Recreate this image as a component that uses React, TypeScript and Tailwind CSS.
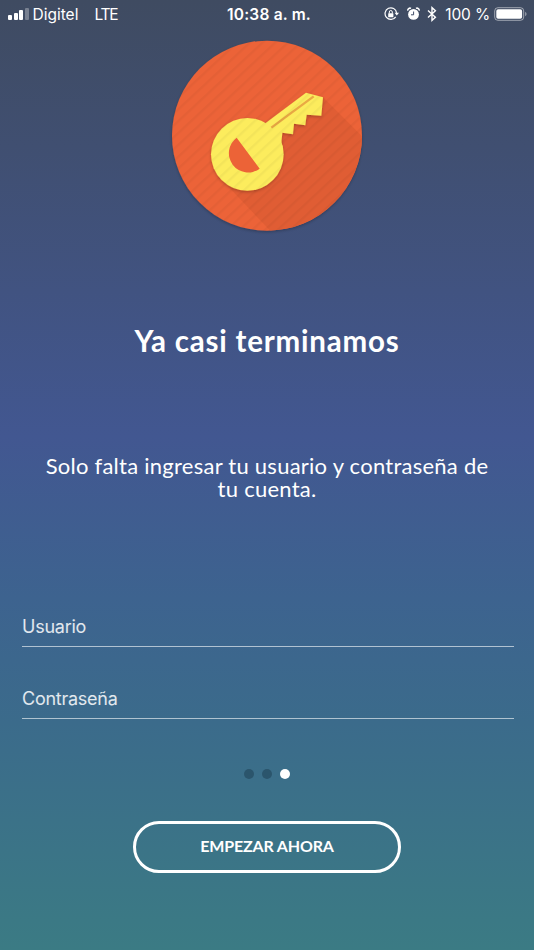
import React, { useState } from 'react';

const signalBars = ['h-[5px]', 'h-[7px]', 'h-[10px]', 'h-[12px] opacity-30'];

const StatusBar: React.FC = () => (
  <div className="relative h-7 flex items-center justify-between pl-2 pr-[7px] text-white text-[15.5px] font-['Inter',sans-serif]">
    <div className="flex items-center">
      <div className="flex items-end gap-[1.5px] h-3 mr-1">
        {signalBars.map((bar) => (
          <span key={bar} className={`w-1 rounded-[1px] bg-white ${bar}`} />
        ))}
      </div>
      <span className="pt-px">Digitel</span>
      <span className="ml-4 pt-px tracking-[-1.2px]">LTE</span>
    </div>

    <span className="absolute inset-x-0 pt-px text-center font-semibold pl-1 tracking-[0.2px]">10:38 a. m.</span>

    <div className="flex items-center">
      {/* Orientation lock */}
      <svg width="15" height="14" viewBox="0 0 15 14" fill="none" stroke="white" className="mr-2">
        <path d="M11.7 9.8A5.8 5.8 0 1 1 12.6 5.8" strokeWidth="1.2" />
        <path d="M10.6 5.7H15L12.8 8.6Z" fill="white" stroke="none" />
        <rect x="4.2" y="6.2" width="5.2" height="4" rx=".5" fill="white" stroke="none" />
        <path d="M5.3 6.5V5a1.5 1.5 0 0 1 3 0v1.5" strokeWidth="1" />
      </svg>
      {/* Alarm */}
      <svg width="13" height="14" viewBox="0 0 13 14" fill="none" stroke="white" className="mr-[7px]">
        <circle cx="6.5" cy="7.4" r="5.4" fill="white" stroke="none" />
        <path d="M.8 3.7A2.2 2.2 0 0 1 4 1.4M9 1.4A2.2 2.2 0 0 1 12.2 3.7" strokeWidth="1.5" />
        <path d="M6.6 4.5v3.3H4" stroke="#404d69" strokeWidth="1" />
      </svg>
      {/* Bluetooth */}
      <svg width="10" height="16" viewBox="0 0 10 16" fill="none" stroke="white" strokeWidth="1.4" className="mr-2">
        <path d="M1 4.6 8.4 11.2 5 14.3V1.7l3.4 3.1L1 11.4" />
      </svg>
      <span className="pt-px tracking-[-0.15px]">100 %</span>
      <svg width="33" height="14" viewBox="0 0 33 14" fill="none" className="ml-1">
        <rect x=".7" y=".7" width="29" height="12.6" rx="3.2" stroke="white" strokeOpacity=".5" />
        <rect x="2.3" y="2.3" width="25.8" height="9.4" rx="1.8" fill="white" />
        <path d="M31.2 4.8c1.8.8 1.8 3.6 0 4.4Z" fill="white" fillOpacity=".5" />
      </svg>
    </div>
  </div>
);

const KeyLogo: React.FC = () => (
  <svg width="214" height="214" viewBox="0 0 642 642" className="mx-auto mt-0.5">
    <defs>
      <pattern id="stripes" width="26" height="26" patternUnits="userSpaceOnUse" patternTransform="rotate(-43)">
        <rect width="26" height="7" fill="#000" fillOpacity=".035" />
      </pattern>
      <clipPath id="disc">
        <circle cx="321" cy="317" r="285" />
      </clipPath>
      <filter id="soft" x="-20%" y="-20%" width="140%" height="140%">
        <feDropShadow dx="0" dy="4" stdDeviation="4" floodColor="#000" floodOpacity=".25" />
      </filter>
    </defs>
    <circle cx="321" cy="317" r="285" fill="#ec6337" filter="url(#soft)" />
    <g clipPath="url(#disc)">
      <path d="M489 202 700 413V700H424L184 448Z" fill="#e05d34" />
      <g filter="url(#soft)" fill="#fcec5d">
        <circle cx="262" cy="373" r="109" />
        <path d="M318 278 438 188 489 202 484 257 440 254 436 286 402 281 399 313 367 308 364 338 368 350 262 373Z" />
      </g>
      <path d="M334 293 461 199" stroke="#e9a944" strokeWidth="7" />
      <rect width="642" height="642" fill="url(#stripes)" />
      <path d="M230 323A57 57 0 0 0 299 416Z" fill="#ec6337" />
    </g>
  </svg>
);

interface FieldProps {
  label: string;
  type: string;
  value: string;
  onChange: (value: string) => void;
}

const Field: React.FC<FieldProps> = ({ label, type, value, onChange }) => (
  <input
    type={type}
    value={value}
    onChange={(e) => onChange(e.target.value)}
    placeholder={label}
    aria-label={label}
    className="block w-full h-[42px] pt-0.5 border-b border-white/60 bg-transparent text-[18px] tracking-[-0.25px] text-white placeholder:text-white/85 outline-none font-['Inter',sans-serif]"
  />
);

const App: React.FC = () => {
  const [user, setUser] = useState('');
  const [password, setPassword] = useState('');
  const activeStep = 2;

  return (
    <div className="h-[950px] w-full flex flex-col overflow-hidden bg-[linear-gradient(to_bottom,#3f4b61,#425791_46%,#3d638f_63%,#3b6b8b_76%,#3b7b84)] text-white font-['Lato',sans-serif]">
      <StatusBar />
      <KeyLogo />

      <h1 className="mt-[77px] text-center text-[29.5px] leading-10 font-bold tracking-[0.8px]">
        Ya casi terminamos
      </h1>

      <p className="mt-[93px] text-center text-[22px] leading-[23px] tracking-[0.25px]">
        Solo falta ingresar tu usuario y contraseña de
        <br />
        tu cuenta.
      </p>

      <form className="mt-[105px] ml-[22px] mr-5 flex flex-col gap-[30px]">
        <Field label="Usuario" type="text" value={user} onChange={setUser} />
        <Field label="Contraseña" type="password" value={password} onChange={setPassword} />
      </form>

      <div className="mt-[50px] flex justify-center gap-2">
        {[0, 1, 2].map((step) => (
          <span
            key={step}
            className={`size-2.5 rounded-full ${step === activeStep ? 'bg-white' : 'bg-[#2b556c]'}`}
          />
        ))}
      </div>

      <button className="mt-[42px] mx-auto w-[268px] h-[52px] pb-0.5 rounded-full border-3 border-white text-[16px] tracking-[-0.15px] font-bold">
        EMPEZAR AHORA
      </button>
    </div>
  );
};

export default App;
